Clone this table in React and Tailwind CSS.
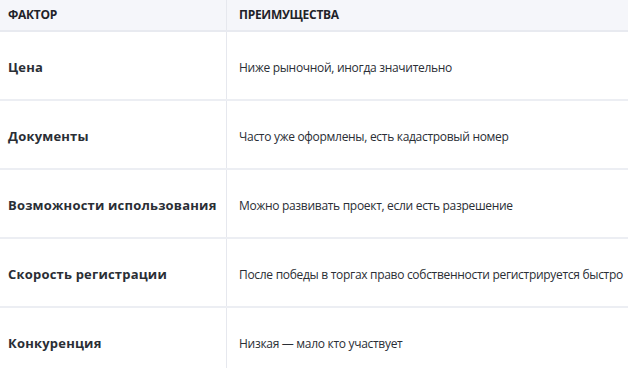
import React from 'react';

const rows = [
  ['Цена', 'Ниже рыночной, иногда значительно'],
  ['Документы', 'Часто уже оформлены, есть кадастровый номер'],
  ['Возможности использования', 'Можно развивать проект, если есть разрешение'],
  ['Скорость регистрации', 'После победы в торгах право собственности регистрируется быстро'],
  ['Конкуренция', 'Низкая — мало кто участвует'],
];

export default function App() {
  return (
    <div className="w-[628px] h-[368px] overflow-hidden bg-white text-[#1f2329]" style={{ fontFamily: '"Open Sans", "Noto Sans", sans-serif' }}>
      <div className="grid grid-cols-[227px_1fr] h-[32px] bg-[#f5f6fa] border-b-2 border-[#e8eaf0]">
        <div className="flex items-center pl-2 text-[12px] font-bold tracking-[-0.3px] border-r border-[#e6e8ee]">ФАКТОР</div>
        <div className="flex items-center pl-3 text-[12px] font-bold tracking-[-0.3px]">ПРЕИМУЩЕСТВА</div>
      </div>
      {rows.map(([factor, benefit]) => (
        <div key={factor} className="grid grid-cols-[227px_1fr] h-[69px] border-b-2 border-[#eceef3]">
          <div className="flex items-center pl-2 pt-1 text-[13px] font-bold tracking-[0.2px] text-[#2a2e35] border-r border-[#e6e8ee]">{factor}</div>
          <div className="flex items-center pl-3 pt-1 text-[12px] tracking-[-0.3px] text-[#2a2e35]">{benefit}</div>
        </div>
      ))}
    </div>
  );
}
